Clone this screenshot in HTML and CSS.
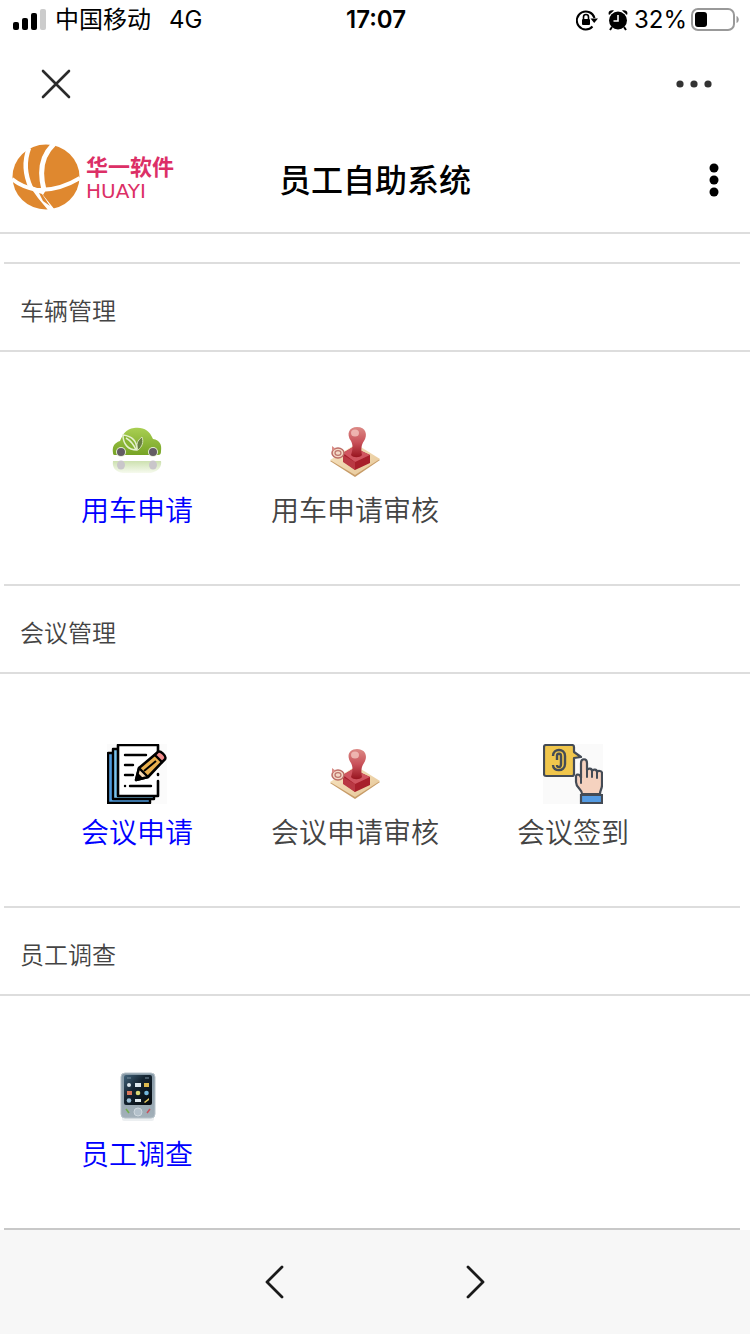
FILE: index.html
```
<!DOCTYPE html>
<html lang="zh-CN">
<head>
    <meta charset="UTF-8">
    <meta name="viewport" content="width=device-width, initial-scale=1.0">
    <title>员工自助系统</title>
    <link rel="stylesheet" href="styles.css">
</head>
<body>
    <svg class="defs" width="0" height="0" aria-hidden="true">
        <defs>
            <linearGradient id="carGreen" x1="0" y1="0" x2="0" y2="1">
                <stop offset="0" stop-color="#a9cf52"/>
                <stop offset="1" stop-color="#76a325"/>
            </linearGradient>
            <linearGradient id="carShadow" x1="0" y1="0" x2="0" y2="1">
                <stop offset="0" stop-color="#cde1b0"/>
                <stop offset="1" stop-color="#f6faee"/>
            </linearGradient>
            <linearGradient id="handle" x1="0" y1="0" x2="0" y2="1">
                <stop offset="0" stop-color="#dc8a86"/>
                <stop offset="0.5" stop-color="#c9525a"/>
                <stop offset="1" stop-color="#98141f"/>
            </linearGradient>
            <linearGradient id="paper" x1="0" y1="0" x2="1" y2="1">
                <stop offset="0" stop-color="#f8e6c4"/>
                <stop offset="1" stop-color="#e6c697"/>
            </linearGradient>
            <linearGradient id="phoneBody" x1="0" y1="0" x2="0" y2="1">
                <stop offset="0" stop-color="#8699a6"/>
                <stop offset="1" stop-color="#a3b0b9"/>
            </linearGradient>
            <linearGradient id="phoneScreen" x1="0" y1="0" x2="1" y2="1">
                <stop offset="0" stop-color="#41627a"/>
                <stop offset="0.4" stop-color="#142431"/>
                <stop offset="1" stop-color="#05090d"/>
            </linearGradient>
            <symbol id="stamp" viewBox="0 0 60 60">
                <path d="M5 39l26-16 24 15-25 17z" fill="#c79c68"/>
                <path d="M5 38l26-16 24 15-25 16z" fill="url(#paper)"/>
                <path d="M18 31l10-6 17 8v8L30 48 18 39z" fill="#a81f2b"/>
                <path d="M18 31l10-6 17 8-15 7z" fill="#d05560"/>
                <path d="M18 33l12 7v8l-12-8z" fill="#b93843"/>
                <path d="M26 33c2-6 2-10 0-14-5-7-2-14 6-14 9 0 11 8 7 14-3 4-3 9-2 14-2 3-9 3-11 0z" fill="url(#handle)"/>
                <ellipse cx="30" cy="11" rx="4" ry="3.500" fill="#f4c4be" opacity="0.8"/>
                <ellipse cx="13" cy="31" rx="6" ry="5" fill="#f3d8c6" stroke="#bb6b65" stroke-width="1.500"/>
                <ellipse cx="13" cy="31" rx="3" ry="2.400" fill="none" stroke="#bd746c" stroke-width="1.200"/>
                <path d="M7 29V24l4 3z" fill="#d98c86"/>
            </symbol>
        </defs>
    </svg>

    <div class="status-bar">
        <div class="status-left">
            <svg width="33" height="22" viewBox="0 0 33 22" aria-hidden="true">
                <rect x="0" y="13" width="6" height="8" rx="2"/>
                <rect x="9" y="9" width="6" height="12" rx="2"/>
                <rect x="18" y="4" width="6" height="17" rx="2"/>
                <rect x="27" y="0" width="6" height="21" rx="2" fill="#ccc"/>
            </svg>
            <span class="carrier">中国移动</span>
            <span>4G</span>
        </div>
        <time class="clock">17:07</time>
        <div class="status-right">
            <svg width="22" height="22" viewBox="0 0 22 22" aria-hidden="true">
                <path d="M16.500 17.500A9 9 0 1 1 18.500 9" fill="none" stroke="#000" stroke-width="2"/>
                <path d="M14.500 9.500h7.500l-3.800 4.500z"/>
                <rect x="6" y="10" width="8" height="6" rx="1"/>
                <path d="M7.500 10V8a2.500 2.500 0 0 1 5 0v2" fill="none" stroke="#000" stroke-width="1.600"/>
            </svg>
            <svg class="alarm" width="20" height="22" viewBox="0 0 20 22" aria-hidden="true">
                <circle cx="10" cy="11.500" r="9"/>
                <path d="M1 6C-.5 3 2 .5 6 1.500zM19 6c1.500-3-1-5.500-5-4.500z"/>
                <path d="M4 18l-2 3M16 18l2 3" stroke="#000" stroke-width="2"/>
                <path d="M10 6v6H5.500" fill="none" stroke="#fff" stroke-width="1.600"/>
            </svg>
            <span>32%</span>
            <svg width="48" height="24" viewBox="0 0 48 24" aria-hidden="true">
                <rect x="1" y="1" width="42" height="21" rx="6" fill="none" stroke="#999" stroke-width="2"/>
                <rect x="4" y="4" width="12" height="15" rx="3"/>
                <path d="M45.500 8v7c3-1 3-6 0-7z" fill="#999"/>
            </svg>
        </div>
    </div>

    <div class="nav-bar">
        <button type="button" aria-label="关闭">
            <svg width="30" height="30" viewBox="0 0 30 30">
                <path d="M2 2l26 26M28 2L2 28" fill="none" stroke="#2b2b2b" stroke-width="2.600" stroke-linecap="round"/>
            </svg>
        </button>
        <button type="button" aria-label="更多">
            <svg width="36" height="8" viewBox="0 0 36 8" fill="#333">
                <circle cx="4" cy="4" r="3.600"/>
                <circle cx="18" cy="4" r="3.600"/>
                <circle cx="32" cy="4" r="3.600"/>
            </svg>
        </button>
    </div>

    <header class="header">
        <div class="logo">
            <svg width="68" height="66" viewBox="0 0 68 66" aria-hidden="true">
                <ellipse cx="34" cy="33" rx="33.500" ry="32.500" fill="#df882f"/>
                <path d="M17 4C12 17 13 31 19 44" fill="none" stroke="#fff" stroke-width="4.500"/>
                <path d="M42 0C30 11 27 27 32 46" fill="none" stroke="#fff" stroke-width="5"/>
                <path d="M0 35c7 6 15 9 25 11M24 46c18 1 31-4 44-12" fill="none" stroke="#fff" stroke-width="4"/>
                <path d="M16 40l10 5 8 1-3 5 12 15h-7L26 54z" fill="#fff"/>
                <path d="M27 49l3 1 8 12-7-5z" fill="#df882f"/>
            </svg>
            <div class="logo-text">
                <span class="logo-cn">华一软件</span>
                <span class="logo-en">HUAYI</span>
            </div>
        </div>
        <h1>员工自助系统</h1>
        <button type="button" class="menu" aria-label="菜单">
            <svg width="10" height="34" viewBox="0 0 10 34">
                <circle cx="5" cy="5" r="4.500"/>
                <circle cx="5" cy="17" r="4.500"/>
                <circle cx="5" cy="29" r="4.500"/>
            </svg>
        </button>
    </header>

    <main>
        <section>
            <h2>车辆管理</h2>
            <div class="grid">
                <a href="#" class="item active">
                    <svg width="60" height="60" viewBox="0 0 60 60" aria-hidden="true">
                        <path d="M6 39h48c1 5-2 10-10 12H16c-8-1-11-6-10-12z" fill="url(#carShadow)"/>
                        <path d="M6 31c-1-6 1-10 7-12 3-7 6-12 14-13 10-1 15 2 19 11 7 1 9 6 8 12 0 3-1 4-3 4H9c-2 0-3 0-3-2z" fill="url(#carGreen)"/>
                        <path d="M16 13c8 1 14 5 14 15-9 0-14-6-14-15zM19 16c5 3 8 7 10 12" fill="#88b334" stroke="#e5f0ce" stroke-width="1.500"/>
                        <path d="M35 15c-5 4-6 7-4 13 4-3 6-8 4-13z" fill="#687d42" stroke="#d6e4b7" stroke-width="1"/>
                        <circle cx="14" cy="30" r="5" fill="#e4edd3"/>
                        <circle cx="14" cy="30" r="4" fill="#635c64"/>
                        <circle cx="46" cy="30" r="5" fill="#e4edd3"/>
                        <circle cx="46" cy="30" r="4" fill="#635c64"/>
                        <ellipse cx="14" cy="43" rx="4" ry="4.500" fill="#c9c6ca"/>
                        <ellipse cx="46" cy="43" rx="4" ry="4.500" fill="#c9c6ca"/>
                    </svg>
                    <span>用车申请</span>
                </a>
                <a href="#" class="item">
                    <svg width="60" height="60" aria-hidden="true"><use href="#stamp"/></svg>
                    <span>用车申请审核</span>
                </a>
            </div>
        </section>

        <section>
            <h2>会议管理</h2>
            <div class="grid">
                <a href="#" class="item active">
                    <svg width="60" height="60" viewBox="0 0 60 60" aria-hidden="true">
                        <rect width="60" height="60" fill="#fbfbfb"/>
                        <path d="M1 9h42v50H1z" fill="#4f9bdc" stroke="#000" stroke-width="2.400" stroke-linejoin="round"/>
                        <path d="M6 5h41v50H6z" fill="#79c3ee" stroke="#000" stroke-width="2.400" stroke-linejoin="round"/>
                        <path d="M51 37v15H11V1h40v11" fill="#fff"/>
                        <path d="M51 37v15H11V1h40v7M51 30v1" fill="none" stroke="#000" stroke-width="2.600" stroke-linecap="round" stroke-linejoin="round"/>
                        <path d="M18 11h21M18 21h8M18 31h8M18 42h.1M23 42h21" stroke="#000" stroke-width="2.400" stroke-linecap="round"/>
                        <path d="M29 36l3-12L51 8l7 7-17 18z" fill="#eab04e" stroke="#000" stroke-width="2.600" stroke-linejoin="round"/>
                        <path d="M29 36l3-12 9 9z" fill="#f7d9b3" stroke="#000" stroke-width="2.400" stroke-linejoin="round"/>
                        <path d="M29 36l2-7 5 5z"/>
                        <path d="M51 8c2-2 9 4 7 7l-3 3-7-7z" fill="#f28d8d" stroke="#000" stroke-width="2.400"/>
                        <path d="M37 27l12-10" stroke="#000" stroke-width="2"/>
                    </svg>
                    <span>会议申请</span>
                </a>
                <a href="#" class="item">
                    <svg width="60" height="60" aria-hidden="true"><use href="#stamp"/></svg>
                    <span>会议申请审核</span>
                </a>
                <a href="#" class="item">
                    <svg width="60" height="60" viewBox="0 0 60 60" aria-hidden="true">
                        <rect width="60" height="60" fill="#fafafa"/>
                        <path d="M3 1h26q2 0 2 2v5l7 5-7 1v16q0 2-2 2H3q-2 0-2-2V3q0-2 2-2z" fill="#f0c64c" stroke="#444b55" stroke-width="2.200" stroke-linejoin="round"/>
                        <path d="M10 12c0-8 12-8 12 0v8c0 8-12 8-12 1M14 21c0 3 4 3 4-1v-8c0-3-4-3-4 0v4" fill="none" stroke="#444b55" stroke-width="2.400"/>
                        <path d="M39 50c0-5-6-6-6-12v-6c1-3 5-1 5 2V19c0-5 6-5 6 0v7c1-2 5-2 5 1 1-2 5-2 5 1 1-2 5-1 5 1v12c0 4-2 5-2 9z" fill="#f5d2bf" stroke="#444b55" stroke-width="2.200" stroke-linejoin="round"/>
                        <path d="M38 33v6M44 26v7M49 27v6M54 28v6" stroke="#444b55" stroke-width="2" stroke-linecap="round"/>
                        <path d="M38 51h21v8H38z" fill="#549be3" stroke="#444b55" stroke-width="2.200"/>
                    </svg>
                    <span>会议签到</span>
                </a>
            </div>
        </section>

        <section>
            <h2>员工调查</h2>
            <div class="grid">
                <a href="#" class="item active">
                    <svg width="60" height="60" viewBox="0 0 60 60" aria-hidden="true">
                        <rect x="15" y="50" width="32" height="5" rx="2" fill="#eceff1"/>
                        <rect x="14" y="7" width="34" height="45" rx="4" fill="url(#phoneBody)" stroke="#b8c3ca" stroke-width="1"/>
                        <rect x="17" y="9" width="28" height="30" rx="2" fill="url(#phoneScreen)"/>
                        <path d="M20 12h4M38 12h4" stroke="#7890a0" stroke-width="1"/>
                        <g fill="#dce6ec">
                            <circle cx="22" cy="19" r="2"/>
                            <rect x="28" y="17" width="6" height="4"/>
                            <rect x="37" y="17" width="5" height="4" fill="#ddb94e"/>
                            <rect x="20" y="25" width="5" height="4" fill="#d9785b"/>
                            <circle cx="31" cy="27" r="2.300" fill="#d8d774"/>
                            <circle cx="39.500" cy="27" r="2.300" fill="#73b7dc"/>
                            <circle cx="22" cy="34.500" r="2.300" fill="#9dc0d6"/>
                            <rect x="28" y="33" width="6" height="3"/>
                            <path d="M37 36l5-4v2l-4 3z" fill="#e3c862"/>
                        </g>
                        <circle cx="31" cy="46" r="4" fill="#b4c1cb" stroke="#cfd8de" stroke-width="1"/>
                        <path d="M19 43l3 4" stroke="#71ae4c" stroke-width="1.500"/>
                        <path d="M43 43l-3 4" stroke="#c8505c" stroke-width="1.500"/>
                    </svg>
                    <span>员工调查</span>
                </a>
            </div>
        </section>
    </main>

    <footer class="toolbar">
        <button type="button" aria-label="后退">
            <svg width="20" height="36" viewBox="0 0 20 36">
                <path d="M18 3L3 18l15 15" fill="none" stroke="#1a1a1a" stroke-width="2.800" stroke-linecap="round" stroke-linejoin="round"/>
            </svg>
        </button>
        <button type="button" aria-label="前进">
            <svg width="20" height="36" viewBox="0 0 20 36">
                <path d="M2 3l15 15L2 33" fill="none" stroke="#1a1a1a" stroke-width="2.800" stroke-linecap="round" stroke-linejoin="round"/>
            </svg>
        </button>
    </footer>
</body>
</html>
```
FILE: styles.css
```
* {
    box-sizing: border-box;
}

body {
    margin: 0;
    min-height: 100vh;
    display: flex;
    flex-direction: column;
    font-family: "Noto Sans CJK SC", sans-serif;
    font-weight: 350;
    background-color: #fff;
    color: #444;
}

svg {
    display: block;
    flex: none;
}

.defs {
    position: absolute;
}

button {
    padding: 0;
    border: none;
    background: none;
    cursor: pointer;
}

.status-bar {
    height: 40px;
    padding: 0 11px 0 13px;
    display: grid;
    grid-template-columns: 1fr auto 1fr;
    align-items: center;
    font-family: Inter, "Noto Sans CJK SC", sans-serif;
    font-size: 24px;
    font-weight: 400;
    line-height: 40px;
    color: #000;
}

.status-left, .status-right {
    display: flex;
    align-items: center;
}

.carrier {
    margin: 0 18px 0 9px;
}

.clock {
    font-weight: 600;
}

.status-right {
    justify-content: flex-end;
    gap: 4px;
}

.alarm {
    margin: 0 2px 0 6px;
}

.nav-bar {
    height: 88px;
    padding: 0 38px 0 41px;
    display: flex;
    align-items: center;
    justify-content: space-between;
}

.header {
    height: 106px;
    padding: 0 12px;
    display: grid;
    grid-template-columns: 1fr auto 1fr;
    align-items: center;
    border-bottom: 2px solid #ddd;
}

.logo {
    display: flex;
    align-items: center;
    gap: 6px;
    padding-bottom: 6px;
}

.logo-text {
    display: flex;
    flex-direction: column;
    gap: 4px;
    color: #dc2f66;
}

.logo-cn {
    font-size: 22px;
    font-weight: bold;
    line-height: 24px;
}

.logo-en {
    font-family: "DejaVu Sans", sans-serif;
    font-size: 20px;
    font-weight: 400;
    line-height: 20px;
}

h1 {
    margin: 0;
    padding-bottom: 4px;
    font-size: 32px;
    font-weight: 500;
    line-height: 48px;
    color: #000;
}

.menu {
    justify-self: end;
    margin-right: 19px;
}

main {
    padding-top: 28px;
}

section::before, main::after {
    content: "";
    display: block;
    height: 2px;
    margin: 0 10px 0 4px;
    background-color: #ddd;
}

main::after {
    background-color: #c8c8c8;
}

h2 {
    margin: 0;
    padding: 28px 20px 22px;
    font-size: 24px;
    font-weight: inherit;
    line-height: 36px;
    border-bottom: 2px solid #ddd;
}

.grid {
    display: grid;
    grid-template-columns: repeat(3, 1fr);
    padding: 70px 68px 54px 28px;
}

.item {
    display: flex;
    flex-direction: column;
    align-items: center;
    gap: 6px;
    font-size: 28px;
    line-height: 42px;
    color: #444;
    text-decoration: none;
}

.active {
    color: #00f;
}

.toolbar {
    flex: 1;
    min-height: 104px;
    display: flex;
    align-items: center;
    justify-content: center;
    gap: 182px;
    background-color: #f7f7f7;
}
```
